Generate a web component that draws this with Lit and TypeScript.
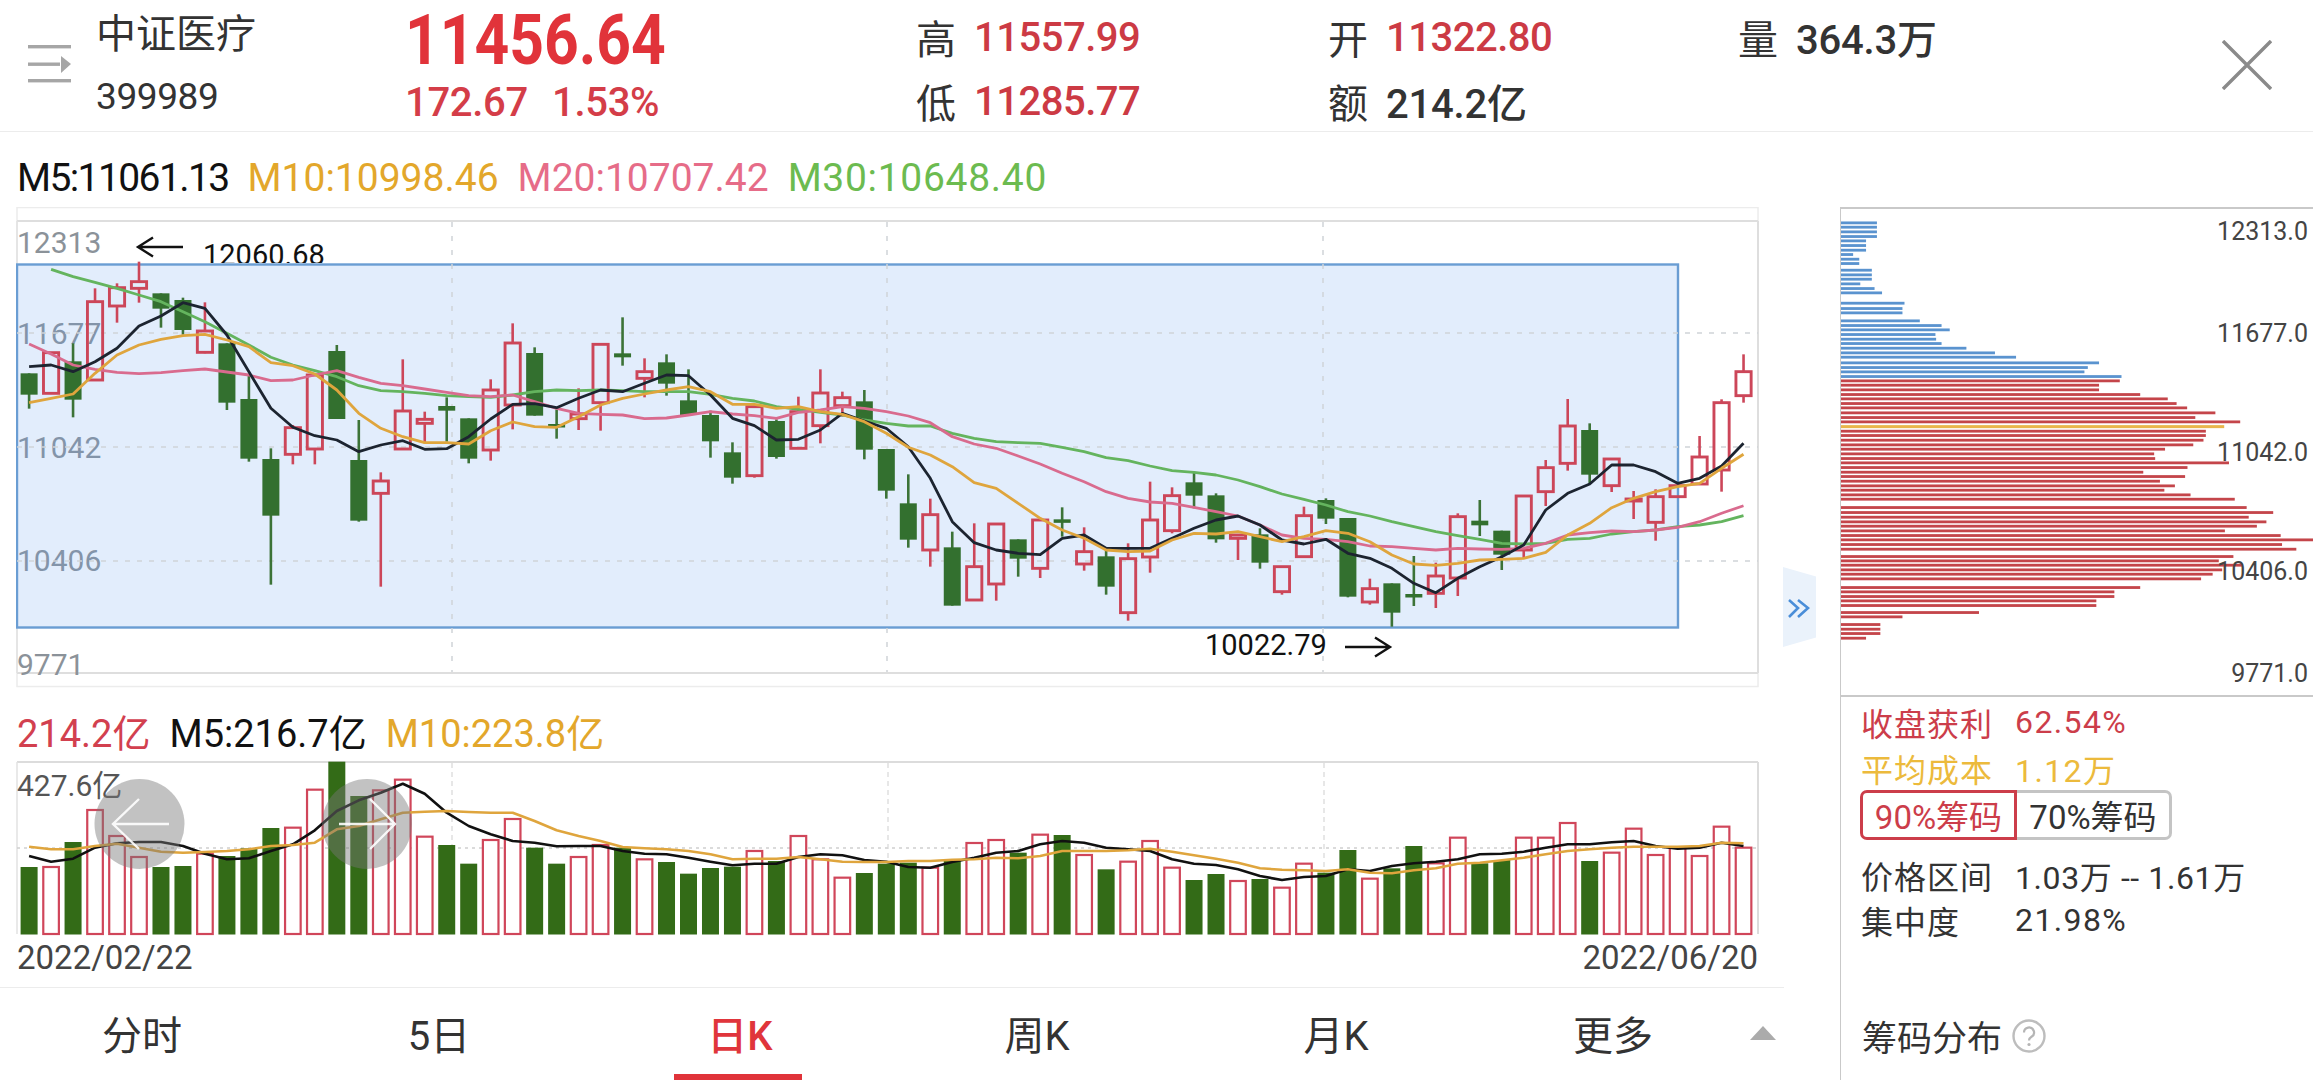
import { LitElement, html, css, svg } from "lit";
import { customElement } from "lit/decorators.js";

type C = [string, number, number, number, number];
const candles: C[] = [
["g",460,460,524,566],["r",398,398,520,520],["g",370,424,539,592],["r",205,245,480,480],["r",190,203,258,308],["r",125,185,205,248],["g",220,220,266,323],["g",233,240,330,344],["r",247,333,397,400],["g",370,370,548,570],
["g",465,537,716,725],["g",685,717,887,1094],["r",615,623,703,733],["r",465,465,687,733],["g",375,393,597,597],["g",600,720,902,905],["r",757,783,820,1100],["r",418,573,687,687],["r",575,598,610,670],["g",532,558,572,665],
["g",595,595,716,730],["r",478,510,690,722],["r",310,369,555,628],["g",382,399,587,587],["g",568,612,616,656],["r",505,582,596,630],["r",373,373,548,632],["g",292,400,412,437],["r",415,455,475,532],["g",403,427,491,527],
["g",448,541,585,585],["g",572,585,664,713],["g",667,697,773,791],["r",560,560,767,773],["g",598,603,711,716],["r",530,575,685,685],["r",448,519,617,670],["r",515,533,557,590],["g",510,544,689,718],["g",687,687,812,836],
["g",763,850,959,983],["r",836,884,990,1040],["g",935,982,1157,1157],["r",910,1040,1140,1140],["r",912,912,1092,1142],["g",958,958,1016,1070],["r",900,900,1045,1074],["g",862,898,908,950],["r",922,995,1032,1052],["g",985,1009,1100,1124],
["r",970,1016,1178,1202],["r",785,900,1011,1058],["r",802,827,932,940],["g",755,787,827,865],["g",820,826,958,968],["r",945,945,955,1020],["g",925,943,1028,1046],["r",1040,1040,1115,1124],["r",860,887,1010,1010],["g",835,840,896,912],
["g",894,894,1130,1132],["r",1076,1106,1146,1154],["g",1090,1090,1178,1220],["g",1008,1122,1128,1158],["r",1028,1068,1120,1164],["r",880,890,1074,1128],["g",840,902,916,948],["g",932,932,1004,1050],["r",825,828,990,1016],["r",720,743,815,858],
["r",537,618,730,752],["g",610,630,764,790],["r",717,717,797,816],["r",813,837,843,897],["r",808,830,907,962],["r",795,797,830,830],["r",648,711,792,792],["r",538,548,750,815],["r",403,455,527,548],
];

const m5 = [440,435,455,425,385,318,288,248,265,345,455,565,622,647,660,695,675,662,688,686,650,597,553,551,563,535,510,515,490,465,467,525,595,617,660,658,630,580,603,625,680,775,905,968,990,1000,1004,955,945,985,985,985,955,925,900,888,915,960,972,958,1000,1015,1045,1090,1118,1075,1040,1010,975,870,820,792,735,735,755,790,775,738,670];
const m10 = [548,535,522,460,405,375,358,347,343,360,380,428,437,462,510,580,625,650,668,668,672,632,606,620,622,590,555,535,522,510,500,515,553,553,565,560,575,583,605,640,682,705,740,788,805,850,895,930,955,990,995,993,960,940,942,935,950,965,950,932,940,965,1005,1032,1036,1030,1020,1018,1015,997,945,910,863,835,815,800,790,745,703];
const m20 = [372,402,435,448,457,461,458,452,447,456,465,482,480,465,452,472,490,497,507,517,527,530,525,545,565,580,583,585,596,594,585,575,582,587,595,577,570,560,565,575,588,608,650,672,685,708,732,760,785,815,835,846,850,862,875,888,915,945,955,958,965,978,980,985,990,985,987,988,985,970,945,938,933,935,930,922,905,880,857];
const m30 = [-1,148,170,187,205,225,245,275,305,340,375,412,435,452,470,497,512,515,520,527,530,532,525,515,510,512,510,512,515,515,515,523,535,543,560,568,577,585,600,610,618,618,640,655,665,668,670,682,695,713,722,738,752,757,765,780,800,822,838,855,875,888,905,920,935,947,958,970,972,970,958,955,942,935,930,920,915,905,887];

const vols: [string, number][] = [
["g",588],["r",588],["g",513],["r",417],["r",495],["r",558],["g",588],["g",585],["r",548],["g",555],["g",532],["g",471],["r",470],["r",356],["g",272],["g",375],["r",358],["r",326],["r",497],["g",522],
["g",578],["r",507],["r",444],["g",530],["g",578],["r",558],["r",522],["g",530],["r",565],["g",573],["g",608],["g",591],["g",587],["r",540],["g",570],["r",495],["r",565],["r",620],["g",606],["g",578],
["g",575],["r",590],["g",565],["r",516],["r",507],["g",545],["r",491],["g",492],["r",552],["g",595],["r",572],["r",510],["r",590],["g",627],["g",609],["r",630],["g",624],["r",650],["r",578],["g",605],
["g",537],["r",623],["g",592],["g",525],["r",577],["r",500],["g",577],["g",567],["r",500],["r",500],["r",456],["g",570],["r",545],["r",473],["r",552],["r",530],["r",555],["r",467],["r",530],
];
const v5 = [555,572,563,530,517,513,513,525,548,565,562,540,520,478,420,388,365,338,368,425,465,490,510,515,526,525,525,540,548,550,560,572,583,578,578,558,550,553,567,572,588,590,573,560,545,540,520,510,515,530,535,540,565,578,582,595,615,627,618,615,595,600,585,577,572,565,550,548,542,530,520,520,514,510,525,533,530,515,525];
const v10 = [527,535,535,525,518,530,542,545,543,540,535,525,522,515,475,465,445,425,422,420,423,425,425,450,478,495,510,528,532,535,540,550,565,563,563,558,565,572,573,573,570,570,566,565,560,562,555,540,540,540,538,533,542,553,563,575,592,596,598,600,595,605,607,598,592,578,575,568,560,550,540,535,530,527,527,527,525,515,517];

const blue: [number, number][] = [[68,285],[81,285],[95,285],[109,285],[122,253],[136,253],[150,253],[163,215],[177,233],[190,233],[210,270],[224,270],[237,270],[251,236],[265,278],[278,300],[309,366],[325,360],[338,360],[362,411],[376,475],[389,499],[403,457],[417,459],[430,475],[444,548],[458,632],[471,694],[488,938],[502,905],[515,895],[529,1004]];
const red: [number, number][] = [[542,999],[555,938],[569,938],[583,1059],[596,1140],[610,1166],[623,1197],[638,1280],[652,1221],[665,1353],[693,1252],[706,1252],[720,1245],[734,1215],[747,1132],[761,1100],[775,1103],[788,1320],[802,1198],[816,1068],[829,1191],[843,1117],[857,1161],[870,1130],[884,1207],[897,1337],[922,1372],[937,1450],[951,1378],[965,1430],[978,1402],[992,1308],[1006,1472],[1019,1568],[1033,1476],[1047,1518],[1069,1333],[1082,1290],[1095,1360],[1109,1300],[1122,1272],[1136,1238],[1162,1059],[1175,983],[1189,983],[1202,930],[1216,930],[1237,585],[1250,360],[1273,295],[1287,295],[1300,295],[1314,253]];

const X = (i: number) => 29.1 + 21.98 * i;
const KY = (z: number) => 220 + z / 3;
const VY = (z: number) => 670 + z / 3;
const pts = (a: number[], f: (z: number) => number) =>
  a.map((z, i) => (z < 0 ? "" : `${X(i).toFixed(1)},${f(z).toFixed(1)}`)).join(" ");

const tabs = ["分时", "5日", "日K", "周K", "月K", "更多"];

@customElement("app-root")
export class AppRoot extends LitElement {
  static styles = css`
    :host { display: block; width: 2313px; height: 1080px; overflow: hidden; background: #fff; color: #333;
      font-family: Roboto, "Noto Sans CJK SC", sans-serif; }
    .header { display: flex; height: 131px; border-bottom: 1px solid #ececec; box-sizing: content-box; }
    .menu { width: 96px; flex: none; padding: 45px 0 0 28px; box-sizing: border-box; }
    .menu svg, .close svg { display: block; }
    .col { display: grid; grid-template-rows: 60px 60px; row-gap: 4px; padding-top: 7px; flex: none; align-items: center; white-space: nowrap; }
    .name { width: 309px; }
    .name .t { font-size: 40px; line-height: 60px; color: #333; margin-top: -4px; }
    .name .c { font-size: 37px; line-height: 60px; color: #333; margin-top: -8px; letter-spacing: -.4px; }
    .price { width: 511px; }
    .big { font-size: 70px; font-weight: 700; color: #e1333a; line-height: 60px; display: inline-block; transform: scaleX(.865); transform-origin: 0 50%; margin-top: 5px; }
    .sub { font-size: 40px; font-weight: 500; color: #d43d48; letter-spacing: -.3px; margin-top: 3px; }
    .sub span + span { margin-left: 24px; }
    .quote { font-size: 40px; display: flex; align-items: center; }
    .quote b { font-weight: 400; color: #333; margin-right: 18px; }
    .quote i { font-style: normal; font-weight: 500; color: #cc3a44; letter-spacing: -.5px; }
    .quote i.n { color: #333; letter-spacing: -.2px; }
    .hl { width: 412px; }
    .oa { width: 410px; }
    .vol { width: 420px; }
    .close { margin-left: 64px; padding-top: 40px; }
    .body { display: flex; height: 948px; }
    .main { width: 1784px; flex: none; position: relative; display: flex; flex-direction: column; }
    .legend { display: flex; gap: 19px; font-size: 39px; padding-left: 17px; height: 75px; align-items: center; padding-top: 17px; box-sizing: border-box; white-space: nowrap; }
    .legend .m5 { letter-spacing: -1.6px; }
    .legend .m30 { letter-spacing: .7px; }
    .k { color: #111; } .o { color: #e3a72b; } .p { color: #e66c88; } .g { color: #6cbb50; } .r { color: #d2404f; }
    .chart { display: block; margin-left: 16px; }
    .vlegend { height: 73px; padding-top: 12px; font-size: 38px; gap: 19px; }
    .dates { height: 51px; display: flex; justify-content: space-between; align-items: center; padding: 0 26px 9px 17px; box-sizing: border-box; font-size: 33px; color: #444; }
    .tabs { position: relative; height: 93px; border-top: 1px solid #ececec; display: grid;
      grid-template-columns: 284px 310px 292px 302px 296px 258px 42px; align-items: center; font-size: 40px; color: #333; text-align: center; padding-bottom: 2px; box-sizing: border-box; }
    .tab.on { color: #e0353b; font-weight: 500; position: relative; align-self: stretch; display: flex; align-items: center; justify-content: center; }
    .tab.on::after { content: ""; position: absolute; left: 50%; margin-left: -66px; width: 128px; height: 6px; bottom: -2px; background: #e0333a; }
    .tri { display: block; margin-left: 8px; }
    .handle { position: absolute; left: 1783px; top: 435px; width: 33px; height: 80px; background: #eaf2fb; clip-path: polygon(0 0, 100% 12%, 100% 88%, 0 100%); }
    .handle svg { display: block; }
    .panel { margin-left: 56px; flex: 1; margin-top: 75px; border-left: 1px solid #c9c9c9; min-width: 0; }
    .panel .chip { display: block; border-top: 2px solid #c9c9c9; border-bottom: 2px solid #c9c9c9; box-sizing: content-box; }
    .info { padding: 2px 0 0 20px; font-size: 32px; letter-spacing: 1px; font-family: "Noto Sans CJK SC", sans-serif; }
    .row { display: grid; grid-template-columns: 154px auto; height: 48px; align-items: center; }
    .row.first { height: 45px; }
    .row.tight { height: 45px; }
    .row span:last-child { font-family: Roboto, "Noto Sans CJK SC", sans-serif; letter-spacing: 1.4px; }
    .row .range { letter-spacing: .6px !important; }
    .red { color: #cc3d4a; } .gold { color: #ecba3c; } .dk { color: #333; }
    .seg { display: flex; width: 312px; height: 50px; margin: -2px 0 12px -1px; font-size: 33px; letter-spacing: 0; font-family: Roboto, "Noto Sans CJK SC", sans-serif; }
    .seg span { display: flex; align-items: center; justify-content: center; box-sizing: border-box; }
    .seg .a { width: 157px; border: 3px solid #cc3d4a; border-radius: 7px 0 0 7px; color: #cc3d4a; }
    .seg .b { flex: 1; border: 3px solid #c4c4c4; border-left: none; border-radius: 0 7px 7px 0; color: #333; }
    .foot { display: flex; align-items: center; gap: 10px; margin-top: 68px; font-size: 35px; letter-spacing: 0; padding-left: 1px; color: #333; }
    .foot svg { display: block; }
    .ax { font-size: 30px; fill: #8b9299; font-family: Roboto, sans-serif; }
    .ann { font-size: 29px; fill: #111; font-family: Roboto, sans-serif; }
    .chipt { font-size: 25px; fill: #444; font-family: Roboto, sans-serif; }
    .vt { font-size: 30px; fill: #555; font-family: Roboto, "Noto Sans CJK SC", sans-serif; }
  `;

  private kchart() {
    const grid = "#cfd3d8";
    return html`<svg class="chart" width="1743" height="481" viewBox="16 207 1743 481">
      ${svg`
      <defs><clipPath id="ac"><rect x="190" y="230" width="160" height="33"></rect></clipPath></defs>
      <rect x="17" y="207.5" width="1741" height="479" fill="none" stroke="#ececec" stroke-width="1.5"></rect>
      <line x1="17" y1="221" x2="1758" y2="221" stroke="#dedede" stroke-width="2"></line>
      <line x1="17" y1="673" x2="1758" y2="673" stroke="#dedede" stroke-width="2"></line>
      <line x1="17" y1="221" x2="17" y2="673" stroke="#e2e2e2" stroke-width="1.5"></line>
      <line x1="1758" y1="221" x2="1758" y2="673" stroke="#dedede" stroke-width="2"></line>
      <text class="ax" x="17" y="253">12313</text>
      <text class="ax" x="17" y="344">11677</text>
      <text class="ax" x="17" y="458">11042</text>
      <text class="ax" x="17" y="571">10406</text>
      <text class="ax" x="17" y="675">9771</text>
      <text class="ann" x="203" y="265" clip-path="url(#ac)">12060.68</text>
      <rect x="17" y="264.5" width="1661" height="363" fill="rgba(100,160,240,.19)" stroke="#6a9dd3" stroke-width="2.4"></rect>
      ${[333, 447, 561].map((y) => svg`<line x1="17" y1=${y} x2="1758" y2=${y} stroke=${grid} stroke-width="1.5" stroke-dasharray="5 7"></line>`)}
      ${[452, 887, 1323].map((x) => svg`<line x1=${x} y1="222" x2=${x} y2="672" stroke=${grid} stroke-width="1.5" stroke-dasharray="5 9"></line>`)}
      <path d="M183 247H138M153 237.5L138 247L153 256.5" fill="none" stroke="#111" stroke-width="2.4"></path>
      <text class="ann" x="1205" y="655">10022.79</text>
      <path d="M1345 647H1390M1375 637.5L1390 647L1375 656.5" fill="none" stroke="#111" stroke-width="2.4"></path>
      ${candles.map((c, i) => {
        const x = X(i);
        const [t, wt, bt, bb, wb] = c;
        if (t === "g") {
          return svg`<line x1=${x} y1=${KY(wt)} x2=${x} y2=${KY(wb)} stroke="#3c7337" stroke-width="2.6"></line>
            <rect x=${x - 8.5} y=${KY(bt)} width="17" height=${Math.max((bb - bt) / 3, 3.5)} fill="#33702f"></rect>`;
        }
        return svg`<line x1=${x} y1=${KY(wt)} x2=${x} y2=${KY(bt)} stroke="#cc4659" stroke-width="2.6"></line>
          <line x1=${x} y1=${KY(bb)} x2=${x} y2=${KY(wb)} stroke="#cc4659" stroke-width="2.6"></line>
          <rect x=${x - 7.6} y=${KY(bt)} width="15.2" height=${Math.max((bb - bt) / 3, 1.5)} fill="none" stroke="#cc4659" stroke-width="2.9"></rect>`;
      })}
      <polyline points=${pts(m30, KY)} fill="none" stroke="#64b45e" stroke-width="2.8" stroke-linejoin="round"></polyline>
      <polyline points=${pts(m20, KY)} fill="none" stroke="#d96b8e" stroke-width="2.8" stroke-linejoin="round"></polyline>
      <polyline points=${pts(m5, KY)} fill="none" stroke="#1c2430" stroke-width="2.8" stroke-linejoin="round"></polyline>
      <polyline points=${pts(m10, KY)} fill="none" stroke="#dfa53d" stroke-width="2.8" stroke-linejoin="round"></polyline>
      `}
    </svg>`;
  }

  private vchart() {
    return html`<svg class="chart" width="1743" height="175" viewBox="16 760 1743 175">
      ${svg`
      <line x1="17" y1="761" x2="1758" y2="761" stroke="#dcdcdc" stroke-width="2"></line>
      <line x1="17" y1="761" x2="17" y2="933" stroke="#e2e2e2" stroke-width="1.5"></line>
      <line x1="1758" y1="761" x2="1758" y2="933" stroke="#dcdcdc" stroke-width="2"></line>
      <line x1="17" y1="847" x2="1758" y2="847" stroke="#cfcfcf" stroke-width="1.5" stroke-dasharray="3 4"></line>
      ${[452, 888, 1324].map((x) => svg`<line x1=${x} y1="762" x2=${x} y2="933" stroke="#d8d8d8" stroke-width="1.2" stroke-dasharray="5 4"></line>`)}
      <text class="vt" x="17" y="795">427.6亿</text>
      ${vols.map(([t, z], i) => {
        const x = X(i);
        const y = VY(z);
        return t === "g"
          ? svg`<rect x=${x - 8.5} y=${y} width="17" height=${933.5 - y} fill="#336b17"></rect>`
          : svg`<rect x=${x - 7.8} y=${y} width="15.6" height=${933 - y} fill="#fff" stroke="#d0465a" stroke-width="2.2"></rect>`;
      })}
      <polyline points=${pts(v5, VY)} fill="none" stroke="#111" stroke-width="2.6" stroke-linejoin="round"></polyline>
      <polyline points=${pts(v10, VY)} fill="none" stroke="#dfa53d" stroke-width="2.6" stroke-linejoin="round"></polyline>
      <circle cx="139.5" cy="823" r="45" fill="rgba(120,120,120,.45)"></circle>
      <circle cx="367" cy="823" r="45" fill="rgba(120,120,120,.45)"></circle>
      <path d="M169 823H113M139 798L113 823L139 848" fill="none" stroke="#fff" stroke-opacity=".9" stroke-width="2.4"></path>
      <path d="M339 823H395M370 798L395 823L370 848" fill="none" stroke="#fff" stroke-opacity=".9" stroke-width="2.4"></path>
      `}
    </svg>`;
  }

  private chip() {
    const L = 1841;
    const ex = (z: number) => 1780 + z / 2.94 - L;
    const y = (z: number) => 200 + z / 3 - 1.2;
    return html`<svg class="chip" width="472" height="486" viewBox="1841 209 472 486">
      ${svg`
      ${blue.map(([z, e]) => svg`<rect x=${L} y=${y(z)} width=${ex(e)} height="2.8" fill="#5a93cf"></rect>`)}
      ${red.map(([z, e]) => svg`<rect x=${L} y=${y(z)} width=${ex(e)} height="2.8" fill="#c4454a"></rect>`)}
      <rect x=${L} y=${y(679)} width=${ex(1306)} height="3" fill="#e9b54b"></rect>
      <text class="chipt" x="2308" y="240" text-anchor="end">12313.0</text>
      <text class="chipt" x="2308" y="342" text-anchor="end">11677.0</text>
      <text class="chipt" x="2308" y="461" text-anchor="end">11042.0</text>
      <text class="chipt" x="2308" y="580" text-anchor="end">10406.0</text>
      <text class="chipt" x="2308" y="682" text-anchor="end">9771.0</text>
      `}
    </svg>`;
  }

  render() {
    return html`
      <div class="header">
        <div class="menu">
          <svg width="44" height="38" viewBox="0 0 44 38" fill="#a6a6a6">
            <rect x="0" y="0" width="43" height="3.4"></rect>
            <rect x="0" y="17.5" width="32" height="3.4"></rect>
            <path d="M33 11L43 19L33 28Z"></path>
            <rect x="0" y="34" width="43" height="3.4"></rect>
          </svg>
        </div>
        <div class="col name"><div class="t">中证医疗</div><div class="c">399989</div></div>
        <div class="col price">
          <div><span class="big">11456.64</span></div>
          <div class="sub"><span>172.67</span><span>1.53%</span></div>
        </div>
        <div class="col hl">
          <div class="quote"><b>高</b><i>11557.99</i></div>
          <div class="quote"><b>低</b><i>11285.77</i></div>
        </div>
        <div class="col oa">
          <div class="quote"><b>开</b><i>11322.80</i></div>
          <div class="quote"><b>额</b><i class="n">214.2亿</i></div>
        </div>
        <div class="col vol">
          <div class="quote"><b>量</b><i class="n">364.3万</i></div>
          <div></div>
        </div>
        <div class="close">
          <svg width="50" height="50" viewBox="0 0 50 50" fill="none" stroke="#8a8a8a" stroke-width="3.4"><path d="M1 1L49 49M49 1L1 49"></path></svg>
        </div>
      </div>
      <div class="body">
        <div class="main">
          <div class="legend">
            <span class="k m5">M5:11061.13</span><span class="o">M10:10998.46</span><span class="p">M20:10707.42</span><span class="g m30">M30:10648.40</span>
          </div>
          ${this.kchart()}
          <div class="legend vlegend">
            <span class="r">214.2亿</span><span class="k">M5:216.7亿</span><span class="o">M10:223.8亿</span>
          </div>
          ${this.vchart()}
          <div class="dates"><span>2022/02/22</span><span>2022/06/20</span></div>
          <div class="tabs">
            ${tabs.map((t) => html`<div class="tab ${t === "日K" ? "on" : ""}">${t}</div>`)}
            <svg class="tri" width="26" height="14" viewBox="0 0 26 14"><path d="M13 0L26 14H0Z" fill="#ababab"></path></svg>
          </div>
          <div class="handle">
            <svg width="33" height="80" viewBox="0 0 33 80" fill="none" stroke="#4a8ed8" stroke-width="2.6"><path d="M6 33L15 41L6 50M15 33L25 41L15 50"></path></svg>
          </div>
        </div>
        <div class="panel">
          ${this.chip()}
          <div class="info">
            <div class="row first red"><span>收盘获利</span><span>62.54%</span></div>
            <div class="row gold"><span>平均成本</span><span>1.12万</span></div>
            <div class="seg"><span class="a">90%筹码</span><span class="b">70%筹码</span></div>
            <div class="row tight dk"><span>价格区间</span><span class="range">1.03万 -- 1.61万</span></div>
            <div class="row tight dk"><span>集中度</span><span>21.98%</span></div>
            <div class="foot"><span>筹码分布</span>
              <svg width="34" height="34" viewBox="0 0 34 34"><circle cx="17" cy="17" r="15.5" fill="none" stroke="#bdbdbd" stroke-width="2.4"></circle><path d="M12 13.5a5 5 0 1 1 7.5 4.3c-1.6 1-2.5 1.8-2.5 3.7" fill="none" stroke="#b5b5b5" stroke-width="2.2"></path><circle cx="17" cy="25.5" r="1.6" fill="#b5b5b5"></circle></svg>
            </div>
          </div>
        </div>
      </div>
    `;
  }
}
